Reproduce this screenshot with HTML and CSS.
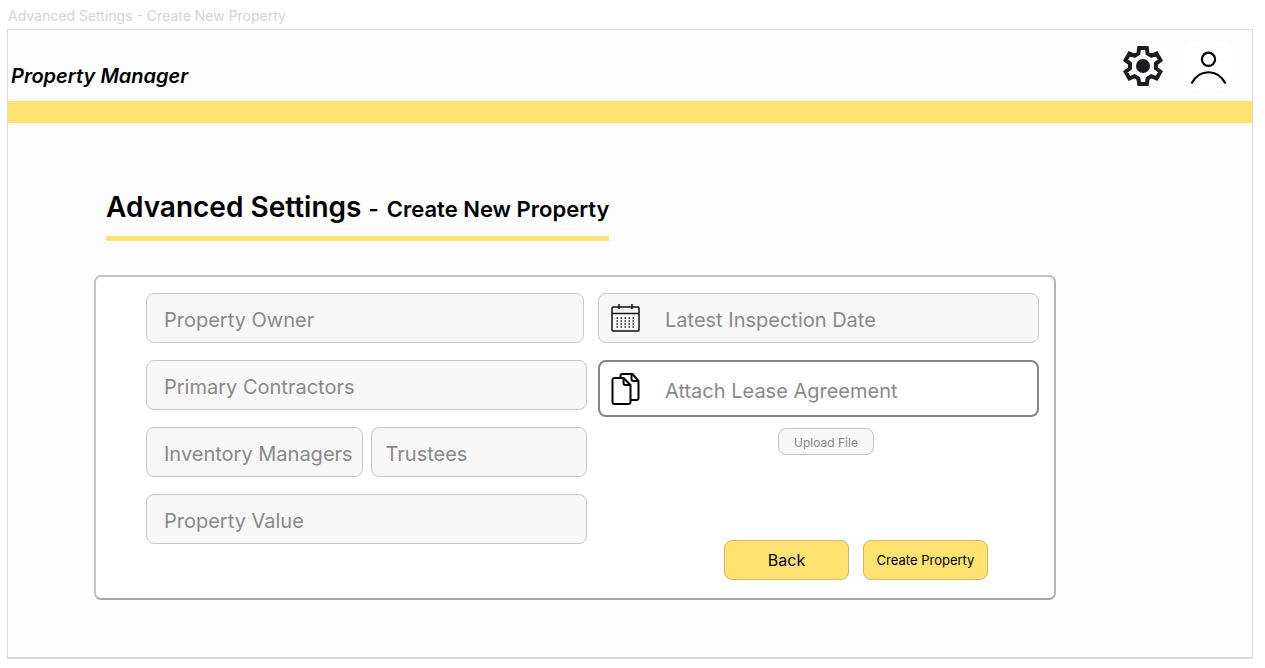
FILE: index.html
```html
<!DOCTYPE html>
<html lang="en">
<head>
<meta charset="utf-8">
<meta name="viewport" content="width=device-width, initial-scale=1">
<title>Advanced Settings - Create New Property</title>
<link rel="stylesheet" href="styles.css">
</head>
<body>
<p class="frame-label">Advanced Settings - Create New Property</p>
<div class="frame">
  <header class="header">
    <span class="brand">Property Manager</span>
    <nav class="header-actions">
      <button class="icon-button" type="button" aria-label="Settings">
        <svg width="48" height="48" viewBox="0 0 24 24" fill="none" stroke="#1d1b20" stroke-width="2">
          <path d="M10.1 3h3.8l.4 2.8 1.9 1.1 2.6-1.1 1.9 3.3-2.2 1.7v2.3l2.2 1.8-1.9 3.3-2.6-1.1-1.9 1.1-.4 2.8h-3.8l-.4-2.8-1.9-1.1-2.6 1.1-1.9-3.3 2.2-1.8v-2.3L3.300 9.100l1.900-3.300 2.600 1.100 1.900-1.100z"/>
          <circle cx="12" cy="12" r="3.500" fill="#1d1b20" stroke="none"/>
        </svg>
      </button>
      <button class="icon-button account" type="button" aria-label="Account">
        <svg width="48" height="48" viewBox="0 0 48 48" fill="none" stroke="#000" stroke-width="2.200">
          <circle cx="24.500" cy="17.300" r="6.600"/>
          <path d="M7.500 41.500C15.500 26.500 33.500 26.500 41.500 41.500"/>
        </svg>
      </button>
    </nav>
  </header>
  <div class="stripe"></div>
  <main class="content">
    <h1 class="title">Advanced Settings <span class="subtitle"><span class="dash">-</span>Create New Property</span></h1>
    <form class="panel">
      <div class="column">
        <input class="field owner" type="text" placeholder="Property Owner" aria-label="Property Owner">
        <input class="field" type="text" placeholder="Primary Contractors" aria-label="Primary Contractors">
        <div class="pair">
          <input class="field" type="text" placeholder="Inventory Managers" aria-label="Inventory Managers">
          <input class="field trustees" type="text" placeholder="Trustees" aria-label="Trustees">
        </div>
        <input class="field" type="text" placeholder="Property Value" aria-label="Property Value">
      </div>
      <div class="column">
        <label class="icon-field">
          <svg width="30" height="30" viewBox="0 0 30 30" fill="none" stroke="#111">
            <rect x="1" y="4" width="27" height="24" rx="1" stroke-width="1.500"/>
            <path d="M1 10.500h27M8 1v5M21 1v5" stroke-width="1.500"/>
            <path d="M5.500 15h19M5.500 18h19M5.500 21h19M5.500 24h19" stroke-width="1.400" stroke-dasharray="1.400 2.600"/>
          </svg>
          <input class="icon-input" type="text" placeholder="Latest Inspection Date" aria-label="Latest Inspection Date">
        </label>
        <label class="icon-field attach">
          <svg width="30" height="34" viewBox="0 0 30 34" fill="none" stroke="#000" stroke-width="2" stroke-linejoin="round">
            <path d="M3.500 6h9l7 7v17a2 2 0 0 1-2 2h-14a2 2 0 0 1-2-2V8a2 2 0 0 1 2-2zM12.500 6v5a2 2 0 0 0 2 2h5"/>
            <path d="M9.500 6V4a2 2 0 0 1 2-2h10l6 7v17a2 2 0 0 1-2 2h-6M20.500 2v5a2 2 0 0 0 2 2h5"/>
          </svg>
          <input class="icon-input" type="text" placeholder="Attach Lease Agreement" aria-label="Attach Lease Agreement">
        </label>
        <button class="upload" type="button">Upload File</button>
        <div class="actions">
          <button class="action back" type="button">Back</button>
          <button class="action" type="submit">Create Property</button>
        </div>
      </div>
    </form>
  </main>
</div>
</body>
</html>
```
FILE: styles.css
```css
* { box-sizing: border-box; }
body {
  margin: 0;
  padding: 6px 12px 10px 7px;
  background: #fff;
  color: #000;
  font-family: Inter, "Liberation Sans", sans-serif;
}
button, input { font: inherit; }
.frame-label {
  margin: 0 0 3px 1px;
  color: #d3d3d3;
  font-size: 14px;
  line-height: 20px;
}
.frame {
  border: 1px solid #dcdcdc;
  border-bottom-width: 2px;
  background: #fdfdfd;
}
.header {
  display: flex;
  justify-content: space-between;
  height: 71px;
  padding: 12px 20px 0 3px;
}
.brand {
  padding-top: 22px;
  font-size: 20px;
  font-style: italic;
  font-weight: 600;
  line-height: 24px;
}
.header-actions { display: flex; gap: 17px; }
.icon-button {
  width: 48px;
  height: 48px;
  padding: 0;
  border: 0;
  background: transparent;
}
.account { border-radius: 12px; background: #fff; }
.icon-button svg, .icon-field svg { display: block; flex: none; }
.stripe { height: 22px; background: #ffe270; }
.content { padding: 64px 196px 57px 86px; }
.title {
  width: max-content;
  margin: 0 0 34px 12px;
  padding-bottom: 7px;
  border-bottom: 5px solid #ffe270;
  font-size: 28px;
  font-weight: 600;
  line-height: 40px;
}
.subtitle { font-size: 22px; }
.dash { margin-right: 8px; }
.panel {
  display: grid;
  grid-template-columns: 1fr 1fr;
  gap: 11px;
  padding: 16px 15px 18px 50px;
  border: 2px solid #c4c4c4;
  border-right-color: #b4b4b4;
  border-bottom-color: #a8a8a8;
  border-radius: 7px;
  background: #fff;
}
.column { display: flex; flex-direction: column; gap: 17px; min-width: 0; }
.field, .icon-field {
  width: 100%;
  height: 50px;
  border: 1px solid #c8c8c8;
  border-radius: 8px;
  background: #f7f7f7;
}
.field { padding: 4px 0 0 17px; font-size: 20px; }
.owner { width: calc(100% - 3px); }
.pair { display: grid; grid-template-columns: 1fr 1fr; gap: 8px; }
.trustees { padding-left: 14px; }
.field::placeholder, .icon-input::placeholder { color: #898989; opacity: 1; }
.icon-field {
  display: flex;
  align-items: center;
  gap: 24px;
  padding-left: 12px;
}
.icon-input {
  flex: 1;
  min-width: 0;
  height: 100%;
  padding: 4px 0 0;
  border: 0;
  background: transparent;
  font-size: 20px;
}
.attach { height: 57px; border: 2px solid #858585; background: #fff; padding-left: 11px; }
.upload {
  align-self: center;
  width: 96px;
  height: 27px;
  margin: -6px 0 0 15px;
  padding: 2px 0 0;
  border: 1px solid #c4c4c4;
  border-radius: 8px;
  background: #f7f7f7;
  color: #858585;
  font-size: 12px;
}
.actions {
  display: flex;
  justify-content: flex-end;
  gap: 14px;
  margin-top: 68px;
  padding-right: 51px;
}
.action {
  width: 125px;
  height: 40px;
  padding: 0;
  border: 1px solid #c8b973;
  border-radius: 8px;
  background: #ffe270;
  color: #000;
  font-size: 13px;
}
.back { font-size: 16px; }
```
